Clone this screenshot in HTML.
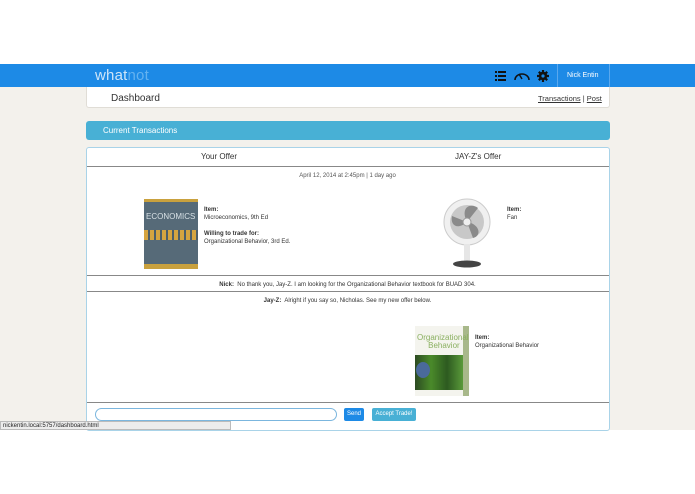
<!DOCTYPE html><html><head><style>
*{margin:0;padding:0;box-sizing:border-box}
body{width:695px;height:494px;background:#fff;font-family:"Liberation Sans",sans-serif;position:relative;overflow:hidden;color:#333}
.a{position:absolute}
.t{font-size:6px;color:#333}
.b{font-weight:bold}
</style></head><body>
<div class="a" style="left:0;top:87px;width:695px;height:343px;background:#f3f1ec"></div>
<div class="a" style="left:0;top:64px;width:695px;height:23px;background:#1d8ae6"></div>
<div class="a" style="left:95px;top:67px;font-size:15px;color:#cfe5f8;letter-spacing:0.2px">what<span style="color:#64b2f0">not</span></div>
<svg class="a" style="left:494px;top:69px" width="56" height="14" viewBox="0 0 56 14">
<g fill="#111"><rect x="1" y="2" width="2" height="2"/><rect x="4" y="2" width="8" height="2"/><rect x="1" y="6" width="2" height="2"/><rect x="4" y="6" width="8" height="2"/><rect x="1" y="10" width="2" height="2"/><rect x="4" y="10" width="8" height="2"/></g>
<path d="M21 11 A7 6 0 0 1 35 11" fill="none" stroke="#111" stroke-width="1.6"/><path d="M28 10 L25 5" stroke="#111" stroke-width="1.4"/>
<circle cx="49" cy="7" r="4.2" fill="#111"/>
<g stroke="#111" stroke-width="2.2"><path d="M49 1v12M43 7h12M44.8 2.8l8.4 8.4M53.2 2.8l-8.4 8.4"/></g><circle cx="49" cy="7" r="1.6" fill="#1d8ae6"/>
</svg>
<div class="a" style="left:557px;top:64px;width:1px;height:23px;background:#5aa8ee"></div>
<div class="a" style="left:609px;top:64px;width:1px;height:23px;background:#5aa8ee"></div>
<div class="a" style="left:567px;top:72px;font-size:7px;color:#fff">Nick Entin</div>
<div class="a" style="left:86px;top:87px;width:524px;height:21px;background:#fff;border:1px solid #e0ddd6;border-top:none;border-radius:0 0 3px 3px"></div>
<div class="a" style="left:111px;top:93px;font-size:10px;color:#333">Dashboard</div>
<div class="a" style="left:538px;top:94px;font-size:7.5px;color:#333"><u>Transactions</u> | <u>Post</u></div>
<div class="a" style="left:86px;top:121px;width:524px;height:19px;background:#48b0d5;border-radius:3px"></div>
<div class="a" style="left:103px;top:126px;font-size:8px;color:#fff">Current Transactions</div>
<div class="a" style="left:86px;top:147px;width:524px;height:284px;background:#fff;border:1px solid #a9d3e8;border-radius:3px"></div>
<div class="a" style="left:201px;top:152px;font-size:8px">Your Offer</div>
<div class="a" style="left:455px;top:152px;font-size:8px">JAY-Z's Offer</div>
<div class="a" style="left:87px;top:166px;width:522px;height:1px;background:#888"></div>
<div class="a t" style="left:0;width:695px;text-align:center;top:173px;color:#555">April 12, 2014 at 2:45pm | 1 day ago</div>
<div class="a" style="left:144px;top:199px;width:54px;height:70px;background:#566a78"></div>
<div class="a" style="left:144px;top:199px;width:54px;height:3px;background:#c9a13e"></div>
<div class="a" style="left:146px;top:212px;font-size:8px;color:#d7e0e5">ECONOMICS</div>
<div class="a" style="left:144px;top:230px;width:54px;height:10px;background:repeating-linear-gradient(90deg,#d5a440 0 4px,#4c5e6a 4px 6px)"></div>
<div class="a" style="left:144px;top:264px;width:54px;height:5px;background:#c9a13e"></div>
<div class="a t" style="left:204px;top:206px;line-height:8px"><span class="b">Item:</span><br>Microeconomics, 9th Ed<br><br><span class="b">Willing to trade for:</span><br>Organizational Behavior, 3rd Ed.</div>
<svg class="a" style="left:440px;top:198px" width="54" height="72" viewBox="0 0 54 72">
<circle cx="27" cy="24" r="23" fill="#f0f0f0" stroke="#ccc"/><circle cx="27" cy="24" r="17" fill="#c8c8c8"/>
<path d="M27 24 C20 10 30 4 38 10 Z M27 24 C40 26 42 38 33 40 Z M27 24 C18 32 10 28 12 18 Z" fill="#8a8a8a"/>
<circle cx="27" cy="24" r="4" fill="#eee" stroke="#999"/>
<rect x="24" y="46" width="6" height="18" fill="#e6e6e6"/><ellipse cx="27" cy="66" rx="14" ry="3.5" fill="#444"/></svg>
<div class="a t" style="left:507px;top:206px;line-height:8px"><span class="b">Item:</span><br>Fan</div>
<div class="a" style="left:87px;top:275px;width:522px;height:1px;background:#888"></div>
<div class="a t" style="left:0;width:695px;text-align:center;top:282px"><span class="b">Nick:</span>&nbsp; No thank you, Jay-Z. I am looking for the Organizational Behavior textbook for BUAD 304.</div>
<div class="a" style="left:87px;top:291px;width:522px;height:1px;background:#888"></div>
<div class="a t" style="left:0;width:695px;text-align:center;top:298px"><span class="b">Jay-Z:</span>&nbsp; Alright if you say so, Nicholas. See my new offer below.</div>
<div class="a" style="left:415px;top:326px;width:54px;height:70px;background:#f4f4ee"></div>
<div class="a" style="left:463px;top:326px;width:6px;height:70px;background:#a8b88a"></div>
<div class="a" style="left:417px;top:334px;font-size:8px;color:#8ab060;line-height:8px">Organizational<br>&nbsp;&nbsp;&nbsp;&nbsp;&nbsp;Behavior</div>
<div class="a" style="left:415px;top:355px;width:48px;height:35px;background:linear-gradient(90deg,#2c4a22,#4a8a2a,#2d5a20,#5a9a3a)"></div>
<div class="a" style="left:416px;top:362px;width:14px;height:16px;border-radius:50%;background:#4a6a9a"></div>
<div class="a t" style="left:475px;top:334px;line-height:8px"><span class="b">Item:</span><br>Organizational Behavior</div>
<div class="a" style="left:87px;top:402px;width:522px;height:1px;background:#888"></div>
<div class="a" style="left:95px;top:408px;width:242px;height:13px;border:1px solid #7bb6de;border-radius:7px;background:#fff"></div>
<div class="a" style="left:344px;top:408px;width:20px;height:13px;background:#1d8ae6;border-radius:2px;color:#fff;font-size:6px;text-align:center;line-height:13px">Send</div>
<div class="a" style="left:372px;top:408px;width:44px;height:13px;background:#48b0d5;border-radius:2px;color:#fff;font-size:6px;text-align:center;line-height:13px">Accept Trade!</div>
<div class="a" style="left:0;top:421px;width:231px;height:9px;background:#ececec;border:1px solid #bbb;font-size:6px;line-height:8px;padding-left:2px;color:#222">nickentin.local:5757/dashboard.html</div>
</body></html>
